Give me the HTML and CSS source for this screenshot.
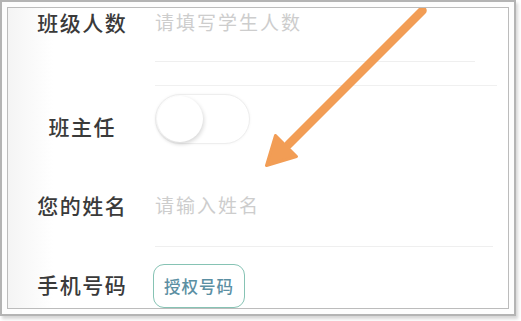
FILE: index.html
```html
<!DOCTYPE html>
<html lang="zh-CN">
<head>
<meta charset="utf-8">
<title>表单</title>
<link rel="stylesheet" href="styles.css">
</head>
<body>
<div class="outer">
  <div class="inner">
    <div class="form">
      <div class="row row-count">
        <div class="label">班级人数</div>
        <div class="field field-count"><span class="ph">请填写学生人数</span></div>
      </div>
      <div class="divider"></div>
      <div class="row row-teacher">
        <div class="label label-teacher">班主任</div>
        <div class="toggle"><div class="knob"></div></div>
      </div>
      <div class="row row-name">
        <div class="label">您的姓名</div>
        <div class="field field-name"><span class="ph">请输入姓名</span></div>
      </div>
      <div class="row row-phone">
        <div class="label label-phone">手机号码</div>
        <div class="auth-btn">授权号码</div>
      </div>
    </div>
    <svg class="arrow" viewBox="8.5 8.5 500 300" width="500" height="300" aria-hidden="true">
      <line x1="423" y1="11" x2="289" y2="145" stroke="#f29d55" stroke-width="8.5" stroke-linecap="round"/>
      <polygon points="267,166 276,136 297,157" fill="#f29d55" stroke="#f29d55" stroke-width="3" stroke-linejoin="round"/>
    </svg>
  </div>
</div>
</body>
</html>
```
FILE: styles.css
```css
html, body {
  margin: 0;
  padding: 0;
  background: #ffffff;
}
body {
  width: 521px;
  height: 321px;
  overflow: hidden;
  font-family: "Noto Sans CJK SC", "Noto Sans", sans-serif;
}
.outer {
  box-sizing: border-box;
  width: 516px;
  height: 316px;
  border: 2px solid #b4b4b4;
  padding: 5px;
  background: #fdfdfd;
  box-shadow: 2px 3px 3px rgba(0, 0, 0, 0.16);
}
.inner {
  position: relative;
  box-sizing: border-box;
  width: 502px;
  height: 302px;
  border: 1.5px solid #bcbcbc;
  overflow: hidden;
  background: linear-gradient(to right, #f4f4f4, #ffffff 45px);
}
.form {
  display: flex;
  flex-direction: column;
}
.row {
  display: flex;
  align-items: flex-start;
}
.label {
  width: 147px;
  flex: none;
  text-align: center;
  font-size: 21px;
  line-height: 28px;
  letter-spacing: 1.5px;
  text-indent: 1.5px;
  color: #3a3a3a;
  font-weight: 500;
}
.field {
  box-sizing: border-box;
  border-bottom: 1px solid #efefef;
}
.ph {
  font-size: 19px;
  line-height: 28px;
  letter-spacing: 2px;
  color: #cdcdcd;
}
.field-count {
  width: 320px;
  height: 54px;
}
.divider {
  margin-left: 147px;
  margin-top: 23px;
  width: 342px;
  border-bottom: 1px solid #f0f0f0;
}
.row-teacher {
  margin-top: 8px;
}
.label-teacher {
  margin-top: 18px;
}
.toggle {
  box-sizing: border-box;
  width: 95px;
  height: 50px;
  border-radius: 25px;
  border: 1px solid #eeeeee;
  background: #ffffff;
  box-shadow: 0 0 3px rgba(0, 0, 0, 0.05);
  display: flex;
  align-items: center;
  padding-left: 1px;
}
.knob {
  width: 46px;
  height: 46px;
  border-radius: 50%;
  background: #ffffff;
  box-shadow: 1px 2px 4px rgba(0, 0, 0, 0.16);
}
.row-name {
  margin-top: 47px;
}
.field-name {
  width: 338px;
  height: 56px;
}
.row-phone {
  margin-top: 17px;
}
.label-phone {
  margin-top: 6px;
}
.auth-btn {
  box-sizing: border-box;
  width: 92px;
  height: 44px;
  margin-left: -2px;
  border: 1.5px solid #86c3b4;
  border-radius: 11px;
  display: flex;
  align-items: center;
  justify-content: center;
  font-size: 16.5px;
  letter-spacing: 1px;
  color: #5b8fa3;
  font-weight: 500;
}
.arrow {
  position: absolute;
  left: 0;
  top: 0;
}
```
